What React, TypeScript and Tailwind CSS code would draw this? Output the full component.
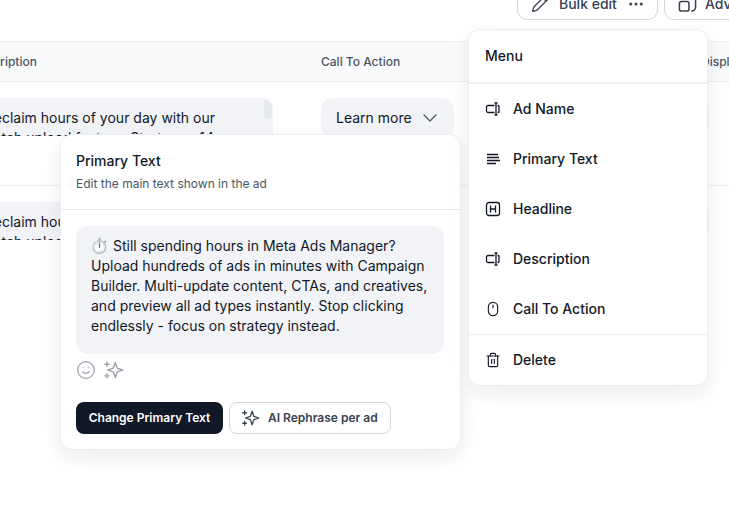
import React from 'react';
import { ChevronDown, Ellipsis, Mouse, Pencil, Smile, Trash2 } from 'lucide-react';

const Stars = ({ className }: { className: string }) => (
  <svg viewBox="0 0 24 24" fill="none" stroke="currentColor" strokeWidth="1.7" strokeLinejoin="round" strokeLinecap="round" className={className}>
    <path d="M13.5 3 L15.8 9.7 L22.5 12 L15.8 14.3 L13.5 21 L11.2 14.3 L4.5 12 L11.2 9.7 Z" />
    <path d="M3.5 2.5v5M1 5h5M3.5 16.5v5M1 19h5" />
  </svg>
);

const TextLines = () => (
  <svg viewBox="0 0 16 16" fill="none" stroke="currentColor" strokeWidth="1.3" className="w-4 h-4">
    <path d="M2 3.5h11M2 6.5h12M2 9.5h13M2 12.5h9" />
  </svg>
);

const HeadingBox = () => (
  <svg viewBox="0 0 16 16" fill="none" stroke="currentColor" strokeWidth="1.3" className="w-4 h-4">
    <rect x="1.5" y="1.5" width="13" height="13" rx="2.5" />
    <path d="M5.5 4.5v7M10.5 4.5v7M5.5 8h5" />
  </svg>
);

const NameIcon = () => (
  <svg viewBox="0 0 16 16" fill="none" stroke="currentColor" strokeWidth="1.3" className="w-4 h-4">
    <path d="M9.5 4.5H3A1.5 1.5 0 0 0 1.5 6v4A1.5 1.5 0 0 0 3 11.5h6.5" />
    <path d="M12.5 4.5h.5a1 1 0 0 1 1 1v5a1 1 0 0 1-1 1h-.5" />
    <path d="M11 2v12M9.5 2h3M9.5 14h3" />
  </svg>
);

const menuItems = [
  { label: 'Ad Name', icon: <NameIcon /> },
  { label: 'Primary Text', icon: <TextLines /> },
  { label: 'Headline', icon: <HeadingBox /> },
  { label: 'Description', icon: <NameIcon /> },
  { label: 'Call To Action', icon: <Mouse className="w-4 h-4" strokeWidth={1.7} /> },
];

const DescriptionCell = () => (
  <div className="relative w-[302px] h-[38px] overflow-hidden rounded-t-xl bg-[#f1f3f7] pl-[14px] pr-[40px] pt-[10px] text-sm leading-5 text-[#111827]">
    <p>Reclaim hours of your day with our batch upload feature. Start your 14-day</p>
    <div className="absolute right-[1px] top-[1px] w-2 h-5 rounded bg-[#e6e8ef]" />
  </div>
);

const CtaCell = () => (
  <div className="w-[133px] h-10 flex items-center gap-[6px] rounded-xl bg-[#f1f3f7] pl-[15px] text-sm text-[#111827]">
    Learn more
    <ChevronDown className="w-6 h-6 text-[#4b5563]" strokeWidth={1.2} />
  </div>
);

const Row = () => (
  <div className="h-[104px] border-b border-[#eceef1] pt-[16px]">
    <div className="-ml-[29px] flex items-start gap-12 w-[800px]">
      <DescriptionCell />
      <CtaCell />
      <div className="w-[207px] h-10 rounded-xl bg-[#f1f3f7]" />
    </div>
  </div>
);

export default function App() {
  return (
    <div className="relative w-[729px] h-[516px] overflow-hidden bg-white font-['Inter',sans-serif]">
      {/* toolbar, cut off by the top of the window */}
      <div className="h-[41px] flex items-end gap-[6px] pl-[517px] pb-[21px] w-[900px]">
        <button className="h-[34px] w-[141px] shrink-0 flex items-center gap-[9px] rounded-[10px] border border-[#d1d5e0] bg-white pl-[13px] pt-[1px] text-sm font-medium text-[#374151]">
          <Pencil className="w-[19px] h-[19px]" strokeWidth={1.6} />
          Bulk edit
          <Ellipsis className="w-[18px] h-[18px] ml-[1px]" strokeWidth={2} />
        </button>
        <button className="h-[34px] w-[141px] shrink-0 flex items-center gap-[8px] rounded-[10px] border border-[#d1d5e0] bg-white pl-[13px] pt-[1px] text-sm font-medium text-[#374151]">
          <svg viewBox="0 0 20 20" fill="none" stroke="currentColor" strokeWidth="1.6" strokeLinecap="round" strokeLinejoin="round" className="w-[19px] h-[19px]">
            <rect x="1.5" y="8" width="10" height="10" rx="2" />
            <path d="M11 1.5h3.5a4 4 0 0 1 4 4V14a4 4 0 0 1-4 4M8 5l3-3.5" />
          </svg>
          Advanced
        </button>
      </div>

      {/* table behind the popovers */}
      <div className="flex items-center h-[41px] border-y border-[#eceef1] bg-[#f9fafb] text-xs font-medium text-[#4b5563]">
        <div className="-ml-[29px] flex w-[1100px] whitespace-nowrap">
          <span className="w-[350px]">Description</span>
          <span className="w-[380px]">Call To Action</span>
          <span>Display Link</span>
        </div>
      </div>
      <Row />
      <div className="pt-[16px]">
        <div className="-ml-[29px] flex items-start gap-12 w-[800px]">
          <DescriptionCell />
          <div className="w-[133px]" />
          <div className="w-[207px] h-10 rounded-xl bg-[#f1f3f7]" />
        </div>
      </div>

      {/* primary text popover */}
      <div className="absolute left-[60px] top-[134px] w-[401px] h-[316px] rounded-xl border border-[#eceef1] bg-white shadow-[0_8px_20px_rgba(17,24,39,0.08)]">
        <div className="h-[75px] border-b border-[#e8eaee] pl-[15px] pr-[16px] pt-[16px]">
          <h3 className="text-sm leading-5 font-medium text-[#111827]">Primary Text</h3>
          <p className="mt-[5px] text-xs leading-4 text-[#4b5563]">Edit the main text shown in the ad</p>
        </div>
        <div className="pl-[15px] pr-[16px] pt-[16px]">
          <div className="h-[128px] rounded-xl bg-[#f1f3f7] px-[15px] pt-[10px] text-sm leading-5 text-[#111827]">
            <span className="-ml-[1px] text-[15px]">⏱️</span> Still spending hours in Meta Ads Manager? Upload hundreds of ads in minutes with Campaign Builder. Multi-update content, CTAs, and creatives, and preview all ad types instantly. Stop clicking endlessly - focus on strategy instead.
          </div>
          <div className="mt-[6px] flex items-center gap-[8px] text-[#9ca3af]">
            <Smile className="w-5 h-5" strokeWidth={1.5} />
            <Stars className="w-5 h-5" />
          </div>
          <div className="mt-[22px] flex gap-[6px]">
            <button className="h-8 w-[147px] rounded-lg bg-[#111827] text-xs font-semibold text-white">Change Primary Text</button>
            <button className="h-8 w-[162px] flex items-center gap-[8px] rounded-lg border border-[#d1d5e0] bg-white pl-[12px] text-xs font-semibold text-[#374151]">
              <Stars className="w-[18px] h-[18px]" />
              AI Rephrase per ad
            </button>
          </div>
        </div>
      </div>

      {/* actions menu */}
      <div className="absolute left-[468px] top-[29px] w-[240px] h-[357px] rounded-xl border border-[#eceef1] bg-white shadow-[0_8px_20px_rgba(17,24,39,0.08)] text-sm font-medium text-[#111827]">
        <div className="h-[54px] flex items-center border-b-2 border-[#eceef1] px-4">Menu</div>
        {menuItems.map((item) => (
          <div key={item.label} className="h-[50px] flex items-center gap-3 px-4">
            {item.icon}
            {item.label}
          </div>
        ))}
        <div className="h-[51px] flex items-center gap-3 border-t border-[#eceef1] px-4">
          <Trash2 className="w-4 h-4" strokeWidth={1.7} />
          Delete
        </div>
      </div>
    </div>
  );
}
